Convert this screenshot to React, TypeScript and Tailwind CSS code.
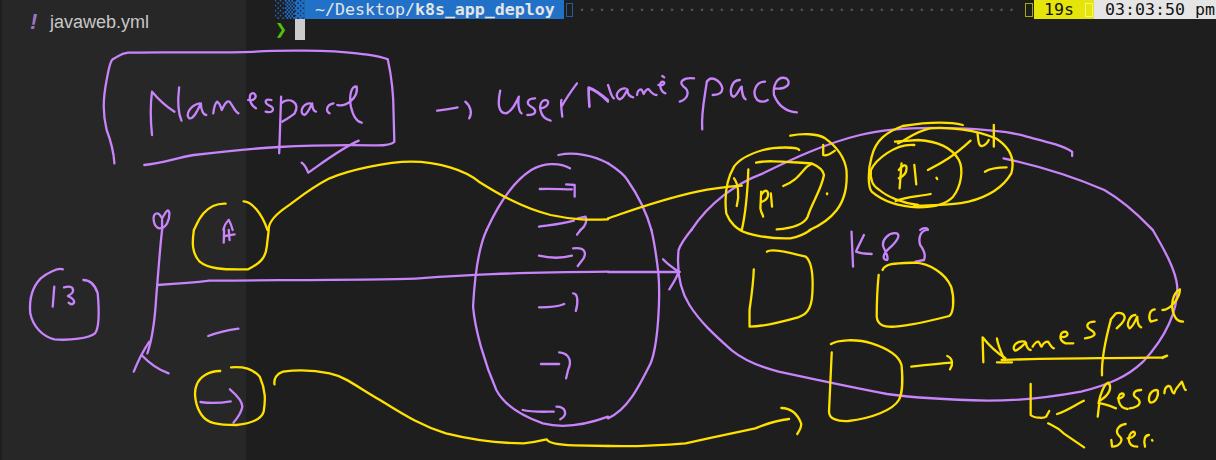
const P = "#c884fb";
const Y = "#ffe100";

const q1p = [
  "M295,490 C293,450 285,420 275,390 C265,340 265,300 275,240 C280,210 283,185 290,178 C305,170 310,160 330,158 C400,155 600,160 660,155 C720,150 850,150 920,160 C960,165 985,170 1000,178 C1008,220 1015,280 1015,340 L1017,425 C1010,435 990,437 960,436 C880,435 780,437 720,441 C640,446 550,458 500,465 C450,475 420,490 372,495",
  "M392,405 C388,360 388,310 392,275 C410,300 430,320 450,335",
  "M462,262 C458,300 460,340 468,362",
  "M515,310 C490,315 478,345 488,355 C500,358 510,330 518,310 C518,330 525,345 532,345",
  "M550,340 C552,320 555,310 560,305 C568,310 570,325 572,330 C578,315 585,300 592,305 C600,315 605,335 615,340",
  "M640,300 C655,305 665,290 655,280 C640,275 640,310 660,325",
  "M700,300 C680,295 680,310 700,320 C710,330 700,340 685,335",
  "M725,290 L720,460",
  "M725,310 C745,290 775,305 760,340 C750,350 735,360 728,365",
  "M800,310 C780,310 770,340 785,345 C795,340 800,320 805,310 C805,325 810,335 815,335",
  "M860,310 C840,315 840,335 850,340",
  "M870,315 C890,322 925,295 920,260 C905,255 900,290 905,320 C910,345 920,365 933,368",
  "M925,422 C880,445 830,490 795,518 C790,505 788,495 778,488",
  "M1127,332 C1150,328 1170,325 1180,322",
  "M1200,305 C1215,320 1218,340 1210,355",
  "M1290,272 C1283,310 1285,340 1305,340 C1320,335 1330,310 1338,290 C1335,310 1338,335 1345,340",
  "M1380,295 C1360,295 1355,310 1370,320 C1385,330 1385,345 1360,345",
  "M1395,325 C1415,320 1420,300 1405,300 C1385,305 1390,355 1420,362",
  "M1450,350 C1448,325 1445,305 1448,300 M1448,320 C1460,295 1475,270 1488,250",
  "M1520,320 L1518,265 C1535,270 1555,290 1568,305",
  "M1470,505 C1440,485 1400,490 1370,510 C1330,540 1290,600 1255,690",
  "M1440,465 C1480,455 1530,465 1568,490",
  "M1392,567 C1420,565 1450,568 1475,568",
  "M1460,553 L1482,555 L1482,590",
  "M1390,680 C1420,675 1460,670 1480,662",
  "M1490,655 L1510,650 C1515,660 1510,680 1497,690",
  "M418,660 L418,690",
  "M410,685 C395,680 390,640 405,640 C412,640 415,650 418,655 C425,640 435,620 437,640 C437,660 430,685 410,685",
  "M590,660 C580,670 578,680 576,690",
  "M590,660 C595,670 598,680 600,690",
];
const q1y = [
  "M582,611 C560,610 540,620 525,640 C510,660 505,680 500,690",
  "M628,604 C650,605 675,640 690,690",
  "M693,685 C695,660 715,640 740,620 C770,595 800,565 850,535 C900,510 1000,485 1060,485 C1130,485 1200,510 1235,545 C1290,585 1350,625 1420,645 C1480,660 1520,660 1568,658",
];
const q2p = [
  "M-48,320 C-50,300 -50,280 -50,262 C-30,270 -15,285 0,300",
  "M0,255 C5,270 8,290 15,295",
  "M45,265 C25,265 15,290 30,298 C40,295 45,280 50,268 C50,280 55,290 65,292",
  "M75,285 C75,275 80,268 85,268 C90,270 90,280 92,282 C95,275 100,265 105,268 C110,275 115,285 125,285",
  "M130,255 C145,260 150,245 140,245 C130,250 135,275 148,280",
  "M140,228 L145,232",
  "M222,235 C195,232 180,245 195,260 C210,270 210,295 185,305",
  "M255,245 C248,300 240,340 243,388",
  "M255,245 C265,225 290,240 295,265 C295,280 285,285 270,285",
  "M340,240 C315,240 310,290 325,290 C335,285 340,260 345,260 C345,280 350,295 355,298",
  "M405,245 C380,245 370,280 385,300 C395,308 405,305 412,300",
  "M430,265 C460,270 475,250 460,235 C435,225 425,260 428,285 C440,320 460,335 487,337",
  "M215,690 C260,610 330,550 400,520 C470,480 560,430 650,405 C720,385 800,380 900,385 C980,388 1040,395 1080,410 C1130,425 1170,435 1197,455 L1197,468",
  "M1020,475 C1100,495 1200,530 1280,570 C1340,610 1380,660 1405,690",
  "M0,490 C20,505 40,520 50,540 C80,590 100,640 112,690",
  "M805,690 C815,680 825,685 825,690",
];
const q2y = [
  "M0,655 C40,640 130,600 230,575 C270,565 310,560 345,557",
  "M493,450 C490,440 430,440 400,450 C370,460 340,475 325,500 C305,540 300,590 305,640 C315,670 335,690 345,690",
  "M470,407 C500,400 540,400 560,415 C590,440 610,470 615,510 C618,560 610,600 590,630 C570,660 540,680 520,690",
  "M382,488 C410,480 450,485 525,490 C545,500 555,510 557,525 C550,570 525,610 515,650 C505,675 470,685 435,688",
  "M452,558 C480,545 490,530 505,510 C515,495 520,495 525,492",
  "M395,575 L393,625 C395,640 400,645 400,650",
  "M395,585 C405,565 415,570 412,590 C408,600 400,605 397,605",
  "M420,580 L423,620",
  "M325,535 C335,550 340,585 332,618",
  "M362,508 C360,570 355,640 345,690",
  "M565,580 L565,583",
  "M555,435 L555,465 C565,470 575,460 585,452",
  "M915,375 C880,365 830,365 760,378 C720,395 690,420 680,470 C670,510 670,560 680,575 C710,605 750,620 800,622 C840,622 870,615 890,590 C910,560 918,510 905,480 C885,440 850,425 800,420 L740,425",
  "M748,430 C770,420 790,395 830,385 C880,380 950,390 1000,415 C1040,445 1050,480 1040,520 C1020,560 980,590 930,605 C880,618 830,615 790,618",
  "M790,435 C740,430 690,480 678,510 C675,540 685,560 700,570 C720,590 760,610 800,615",
  "M742,603 C770,590 800,590 832,582",
  "M825,510 C860,490 890,470 935,422",
  "M757,490 L752,565",
  "M750,510 C760,495 770,490 770,505 C770,520 760,530 750,535",
  "M790,495 L795,553",
  "M847,533 L849,537",
  "M953,400 C955,420 955,440 965,438 C975,435 980,425 982,420",
  "M995,375 L995,440",
  "M972,515 C985,505 1010,502 1028,502",
];
const q3p = [
  "M418,0 C412,60 408,130 403,200 C400,260 395,320 380,370",
  "M345,425 C355,395 365,370 385,335",
  "M365,375 C385,400 410,420 435,430",
  "M405,165 C450,162 500,158 540,152 C700,150 1000,150 1080,145 C1200,135 1300,128 1568,125",
  "M1255,0 C1235,50 1225,120 1220,230 C1225,300 1250,400 1280,480 C1300,525 1340,555 1400,580 C1450,595 1510,585 1568,560",
  "M162,118 C150,112 120,130 105,145 C80,175 75,210 78,250 C85,290 110,320 140,328 C180,332 230,325 245,310 C258,290 255,230 252,190 C245,165 235,150 215,150",
  "M140,170 L136,230",
  "M165,172 C185,165 190,175 188,185 C185,195 178,195 175,198 C190,205 195,215 188,222 C183,225 180,220 177,218",
  "M537,318 C560,308 590,300 615,296",
  "M517,516 C540,520 575,518 595,514",
  "M593,478 C610,495 625,515 625,530 C622,550 612,565 602,578",
  "M1497,0 L1488,14",
  "M1390,77 C1420,85 1450,85 1475,77",
  "M1478,55 C1510,50 1512,70 1505,85 L1490,108",
  "M1390,232 C1420,232 1440,230 1455,222",
  "M1478,190 C1490,190 1492,215 1485,243",
  "M1395,402 L1442,402",
  "M1442,367 C1470,370 1475,395 1465,420 L1460,445",
  "M1348,540 C1370,547 1400,545 1428,545",
  "M1435,530 C1460,530 1465,555 1445,568",
  "M578,0 L577,38",
  "M590,0 L592,30",
  "M580,18 L605,13",
];
const q3y = [
  "M500,0 C495,40 495,70 515,95 C535,115 570,120 640,118 C670,100 685,85 688,50 L693,0",
  "M568,423 C540,422 515,440 507,465 C498,490 505,530 520,555 C535,580 560,585 610,585 C650,580 675,565 680,545 C685,510 685,480 670,440 C650,415 630,410 596,412",
  "M708,463 C705,445 715,430 730,425 C760,420 800,418 850,430 C890,440 920,470 980,510 C1030,545 1080,585 1150,610 C1220,630 1290,640 1350,640 C1380,638 1400,630 1410,628 C1415,640 1440,645 1480,646 L1568,648",
];
const q4p = [
  "M1405,0 C1430,50 1465,120 1468,170 C1470,240 1440,320 1380,395 C1340,440 1290,465 1220,485 C1150,500 1080,512 980,512 C900,510 800,505 720,492 C640,475 540,450 440,425 C390,410 350,390 320,362 C280,320 240,280 210,225 C180,170 178,110 182,60 C190,35 205,15 215,0",
  "M0,565 C50,540 80,470 110,400 C130,340 135,200 130,130 C125,80 118,30 112,0",
  "M0,126 L185,126",
  "M142,88 C155,105 170,115 182,125",
  "M182,125 C175,150 165,165 158,178",
  "M628,5 L632,110",
  "M660,15 C650,40 640,60 640,65 C650,70 665,72 680,72",
  "M745,10 C725,5 705,30 710,50 C715,65 725,80 720,90 C705,90 710,70 725,55 C745,35 755,15 745,10",
  "M820,0 C805,5 800,25 805,45 C815,60 820,75 815,90 L793,95",
];
const q4y = [
  "M0,648 C80,650 150,645 200,640 C260,625 340,605 380,595 C410,580 430,572 467,567",
  "M447,534 C475,535 490,555 498,580 C500,590 495,600 488,612",
  "M340,0 C360,15 420,27 470,25 C495,20 510,10 522,0",
  "M410,65 C420,55 460,65 510,80 C525,95 530,130 527,190 C525,240 510,255 490,262 C450,275 400,290 365,290 L365,240 C370,200 375,160 376,118",
  "M708,120 C715,100 740,100 790,98 C830,100 870,130 885,170 C895,210 890,250 880,258 C840,270 790,285 740,290 C710,292 695,285 693,260 C693,210 695,170 698,135",
  "M575,342 C590,330 640,325 680,340 C720,355 750,375 757,405 C760,440 760,490 750,510 C735,540 680,565 620,573 C590,575 570,565 570,545 C572,490 575,420 577,367",
  "M782,410 C820,405 860,400 885,398",
  "M875,378 C890,385 890,405 882,418",
  "M968,397 L966,322 C985,350 1005,370 1025,385",
  "M1003,325 C1005,345 1015,370 1022,388",
  "M1075,335 C1050,330 1040,355 1050,362 C1060,360 1070,345 1078,338 C1078,350 1085,360 1090,360",
  "M1095,350 C1100,340 1105,335 1110,335 C1115,340 1115,350 1118,350 C1122,340 1130,335 1135,335 C1140,345 1145,355 1150,355",
  "M1168,320 C1185,325 1190,310 1180,305 C1165,305 1160,330 1180,340 L1200,340",
  "M1255,275 C1235,275 1230,290 1245,300 C1260,310 1260,320 1230,325",
  "M1297,268 C1285,320 1272,380 1274,436",
  "M1297,268 L1310,250 C1330,245 1340,260 1325,280 L1312,295",
  "M1360,255 C1345,255 1335,285 1345,295 C1355,290 1360,270 1365,260 C1365,280 1370,290 1375,292",
  "M1410,238 C1395,240 1393,265 1400,275 L1415,270",
  "M1430,240 C1450,240 1475,205 1475,178 C1455,190 1450,230 1460,255 C1465,270 1475,275 1483,275",
  "M1003,397 L1042,397",
  "M1015,390 C1100,385 1300,385 1430,382 L1442,377 L1430,384",
  "M1090,462 L1090,555 C1100,565 1125,565 1130,560 L1138,543",
  "M1135,580 C1150,590 1160,590 1175,610 L1228,652",
  "M1158,552 C1180,545 1205,525 1227,512",
  "M1263,560 L1268,510 M1290,458 C1280,462 1270,490 1265,520 C1275,520 1290,525 1310,535 M1290,458 C1300,470 1295,495 1268,512",
  "M1315,505 C1330,505 1335,490 1325,490 C1310,495 1315,535 1340,537",
  "M1375,480 C1355,480 1350,495 1365,505 C1375,515 1375,530 1345,535",
  "M1415,480 C1395,480 1390,515 1400,518 C1415,515 1420,495 1418,482",
  "M1435,490 C1435,470 1445,465 1450,470 C1455,480 1455,490 1460,490 C1465,470 1475,465 1480,455 C1485,470 1487,480 1490,480",
  "M1335,582 C1315,585 1305,605 1320,620 C1330,630 1320,650 1300,650 L1298,630",
  "M1340,625 C1355,625 1365,610 1355,605 C1340,610 1335,650 1365,650",
  "M1385,650 C1380,630 1385,615 1395,615",
  "M1403,630 L1404,632",
];

function Strokes({ d, color }: { d: string[]; color: string }) {
  return (
    <g stroke={color} fill="none" strokeLinecap="round" strokeLinejoin="round">
      {d.map((p, i) => (
        <path key={i} d={p} strokeWidth={2.3} vectorEffect="non-scaling-stroke" />
      ))}
    </g>
  );
}

const sx = 608 / 1568;
const sy = 1 / 3;

function Ink() {
  return (
    <svg className="absolute inset-0 pointer-events-none" width={1216} height={460} viewBox="0 0 1216 460">
      <g transform={`translate(0 0) scale(${sx} ${sy})`}>
        <Strokes d={q1p} color={P} />
        <Strokes d={q1y} color={Y} />
      </g>
      <g transform={`translate(608 0) scale(${sx} ${sy})`}>
        <Strokes d={q2p} color={P} />
        <Strokes d={q2y} color={Y} />
      </g>
      <g transform={`translate(0 230) scale(${sx} ${sy})`}>
        <Strokes d={q3p} color={P} />
        <Strokes d={q3y} color={Y} />
      </g>
      <g transform={`translate(608 230) scale(${sx} ${sy})`}>
        <Strokes d={q4p} color={P} />
        <Strokes d={q4y} color={Y} />
      </g>
    </svg>
  );
}

const mono = "font-['DejaVu_Sans_Mono','Liberation_Mono',monospace]";

export default function App() {
  return (
    <div className="relative flex h-[460px] w-[1216px] overflow-hidden bg-[#1e1e1e]">
      <aside className="w-[246px] shrink-0 border-l-2 border-[#1e1e1e] bg-[#272727] pl-[28px] pt-[9px]">
        <div className="flex items-center gap-[11px] font-['Liberation_Sans',Arial,sans-serif] text-[18px] leading-[26px] text-[#c8c8c8]">
          <span className="w-[9px] text-[22px] font-bold italic text-[#a074c4]">!</span>
          <span>javaweb.yml</span>
        </div>
      </aside>
      <main className={`min-w-0 flex-1 ${mono} text-[16.6px]`}>
        <div className="flex h-[19px] items-stretch leading-[19px]">
          <div className="ml-[29px] h-[19px] w-[30px] overflow-hidden whitespace-pre text-[#1f6fc6]">░▒▓</div>
          <div className="w-[259px] whitespace-pre bg-[#2271c9] pl-[10px] text-[#e4e4e4]">
            ~/Desktop/<b>k8s_app_deploy</b>
          </div>
          <div className="ml-[2px] mt-[3px] h-[14px] w-[7px] border border-[#1f5f9e]" />
          <div className="ml-[4px] min-w-0 flex-1 whitespace-pre text-[#555555]">
            {"·".repeat(44)}
          </div>
          <div className="mt-[3px] mr-[1px] h-[14px] w-[8px] border border-[#a8a80c]" />
          <div className="flex w-[60px] items-center bg-[#e5e50c] pl-[10px] text-[#111111]">
            19s
            <span className="ml-[11px] h-[14px] w-[8px] shrink-0 border border-[#f4f48c]" />
          </div>
          <div className="w-[122px] whitespace-pre bg-[#e5e5e5] pl-[11px] text-[#111111]">03:03:50 pm</div>
        </div>
        <div className="flex h-[21px] items-center pl-[29px]">
          <span className="w-[20px] text-[20px] font-bold leading-[21px] text-[#4ec40a]">❯</span>
          <span className="h-[21px] w-[10px] bg-[#cccccc]" />
        </div>
      </main>
      <Ink />
    </div>
  );
}
